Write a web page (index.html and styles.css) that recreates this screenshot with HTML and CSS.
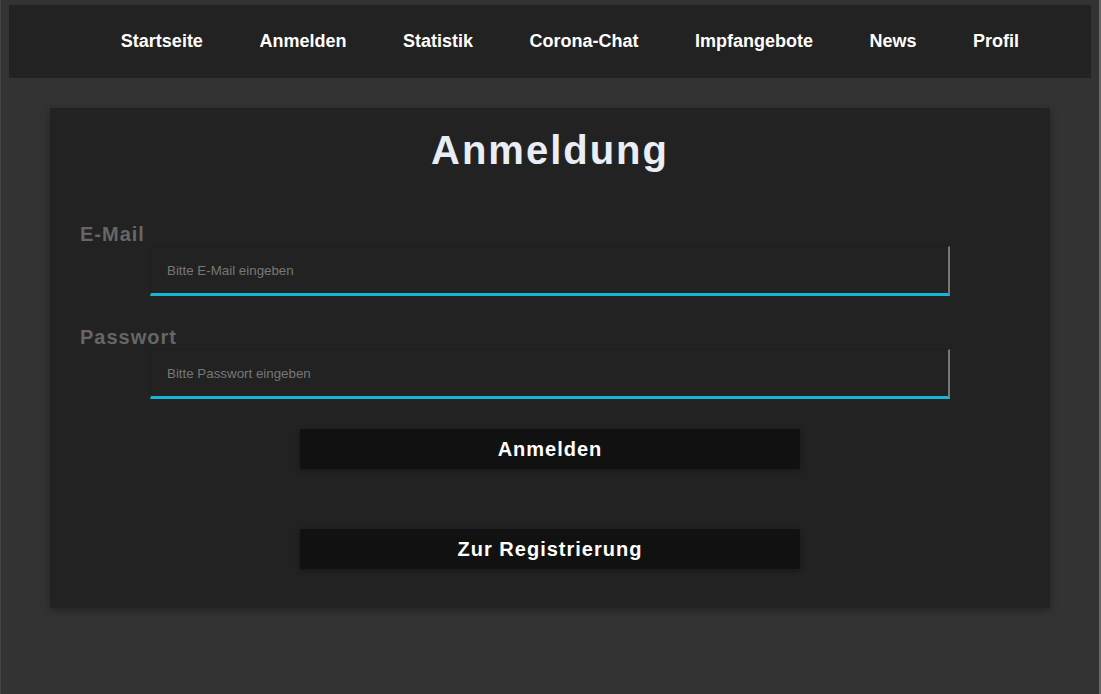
FILE: index.html
```html
<!DOCTYPE html>
<html lang="de">
<head>
<meta charset="utf-8">
<title>Anmeldung</title>
<link rel="stylesheet" href="styles.css">
</head>
<body>
<div class="page">
  <nav class="nav">
    <a class="nav-link" href="#">Startseite</a>
    <a class="nav-link" href="#">Anmelden</a>
    <a class="nav-link" href="#">Statistik</a>
    <a class="nav-link" href="#">Corona-Chat</a>
    <a class="nav-link" href="#">Impfangebote</a>
    <a class="nav-link" href="#">News</a>
    <a class="nav-link" href="#">Profil</a>
  </nav>
  <main class="card">
    <h1 class="title">Anmeldung</h1>
    <form class="form">
      <div class="field">
        <label class="label" for="email">E-Mail</label>
        <input class="input" id="email" type="email" placeholder="Bitte E-Mail eingeben">
      </div>
      <div class="field">
        <label class="label" for="pw">Passwort</label>
        <input class="input" id="pw" type="password" placeholder="Bitte Passwort eingeben">
      </div>
      <button class="btn btn-first" type="button">Anmelden</button>
      <button class="btn btn-second" type="button">Zur Registrierung</button>
    </form>
  </main>
</div>
</body>
</html>
```

FILE: styles.css
```css
* { box-sizing: border-box; }

html, body {
  margin: 0;
  padding: 0;
}

body {
  background: #333333;
  font-family: "Liberation Sans", Arial, sans-serif;
  min-height: 694px;
  border-left: 1px solid #444444;
  border-right: 2px solid #666666;
}

.page {
  padding: 5px 8px 0 8px;
}

.nav {
  background: #222222;
  height: 73px;
  display: flex;
  align-items: center;
  justify-content: flex-end;
  gap: 56.5px;
  padding-right: 72px;
}

.nav-link {
  color: #ffffff;
  text-decoration: none;
  font-weight: bold;
  font-size: 18px;
}

.card {
  width: 1000px;
  margin: 30px auto 0;
  background: #222222;
  box-shadow: 0 2px 8px rgba(0, 0, 0, 0.35);
  padding: 19px 30px 39px;
}

.title {
  margin: 0;
  text-align: center;
  font-size: 40px;
  line-height: 46px;
  letter-spacing: 2px;
  color: #e9edf5;
  font-weight: bold;
}

.form {
  display: flex;
  flex-direction: column;
  align-items: stretch;
  margin-top: 50px;
}

.field {
  display: flex;
  flex-direction: column;
  margin-bottom: 30px;
}

.label {
  color: #666666;
  font-size: 20px;
  line-height: 23px;
  font-weight: bold;
  letter-spacing: 1px;
  margin-bottom: 0;
}

.input {
  align-self: center;
  width: 800px;
  height: 50px;
  background: #222222;
  border: none;
  border-top: 1px solid #1e1e1e;
  border-left: 1px solid #1e1e1e;
  border-right: 2px solid #777777;
  border-bottom: 3px solid #17b4d8;
  padding: 0 16px;
  font-family: "Liberation Sans", Arial, sans-serif;
  font-size: 13.333px;
  color: #cccccc;
  outline: none;
}

.input::placeholder {
  color: #777777;
}

.btn {
  align-self: center;
  width: 500px;
  height: 40px;
  background: #111111;
  color: #ffffff;
  border: none;
  font-family: "Liberation Sans", Arial, sans-serif;
  font-weight: bold;
  font-size: 20px;
  letter-spacing: 1px;
  box-shadow: 0 2px 6px rgba(0, 0, 0, 0.3);
  cursor: pointer;
}

.btn-first {
  margin-top: 0;
}

.btn-second {
  margin-top: 60px;
}
```
